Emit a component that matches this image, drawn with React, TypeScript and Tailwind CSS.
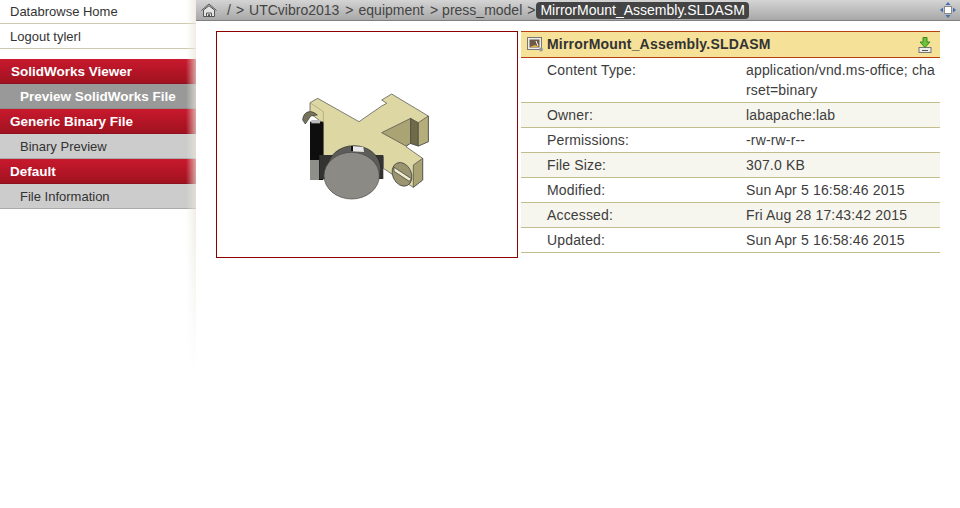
import React from "react";

const rows: [string, string][] = [
  ["Owner:", "labapache:lab"],
  ["Permissions:", "-rw-rw-r--"],
  ["File Size:", "307.0 KB"],
  ["Modified:", "Sun Apr 5 16:58:46 2015"],
  ["Accessed:", "Fri Aug 28 17:43:42 2015"],
  ["Updated:", "Sun Apr 5 16:58:46 2015"],
];

function Head({ children, pl }: { children: string; pl: string }) {
  return (
    <div className={`h-[25px] leading-[25px] font-bold text-white text-[13.5px] bg-gradient-to-b from-[#c9192e] to-[#a0121f] border-b border-[#8c1020] ${pl}`}>
      {children}
    </div>
  );
}

function Item({ children, active }: { children: string; active?: boolean }) {
  return (
    <div
      className={
        active
          ? "h-[25px] leading-[25px] pl-[20px] font-bold text-white text-[13.5px] bg-[#999999] border-b border-[#8a8a8a]"
          : "h-[25px] leading-[25px] pl-[20px] text-[#333333] text-[13px] bg-[#cccccc] border-b border-[#aaaaaa]"
      }
    >
      {children}
    </div>
  );
}

function Part() {
  return (
    <svg width="170" height="130" viewBox="0 0 510 390" className="ml-[63px] mt-[48px] block">
      <polygon points="90,68 113,55 237,125 305,78 320,70 305,60 335,42 445,108 445,185 415,198 390,190 378,200 428,235 428,300 400,322 340,285 310,265 310,230 130,230 130,130 90,100" fill="#ddd7a4" stroke="#444" strokeWidth="2" strokeLinejoin="round" />
      <path d="M90,68 L130,95 L130,130" fill="none" stroke="#8f8a62" strokeWidth="1.5" />
      <polygon points="305,158 392,115 392,190 378,198" fill="#aaa474" stroke="#444" strokeWidth="2" />
      <polygon points="392,115 415,128 415,198 392,190" fill="#6f6b48" stroke="#444" strokeWidth="2" />
      <polygon points="415,128 445,108 445,185 415,198" fill="#b5ae7a" stroke="#444" strokeWidth="2" />
      <polygon points="400,255 428,235 428,300 400,322" fill="#a9a373" stroke="#444" strokeWidth="2" />
      <rect x="90" y="125" width="40" height="175" fill="#0e0e0e" />
      <rect x="90" y="240" width="27" height="60" fill="#8f8f8a" />
      <rect x="118" y="225" width="192" height="72" fill="#333331" />
      <ellipse cx="222" cy="266" rx="80" ry="69" fill="#5c5c58" stroke="#222" strokeWidth="2" />
      <path d="M212 198 L212 214 L252 216 L250 201 Z" fill="#e8e8e8" />
      <rect x="212" y="198" width="7" height="16" fill="#111" />
      <ellipse cx="215" cy="287" rx="83" ry="70" fill="#8b8a85" stroke="#444" strokeWidth="2" />
      <ellipse cx="366" cy="283" rx="28" ry="37" fill="#9a9570" stroke="#333" strokeWidth="2" transform="rotate(-25 366 283)" />
      <path d="M342 262 L394 296 L388 304 L342 274 Z" fill="#f0edcf" stroke="#333" strokeWidth="2" />
      <path d="M68 120 C70 92 95 88 112 105 L92 108 L76 132 Z" fill="#77735a" stroke="#333" strokeWidth="2" />
      <rect x="94" y="120" width="26" height="10" fill="#bbb" />
    </svg>
  );
}

export default function App() {
  return (
    <div className="relative flex w-[960px] h-[508px] bg-white overflow-hidden text-[14px] text-[#333333] font-['Liberation_Sans',Arial,sans-serif]">
      <aside className="relative w-[196px] shrink-0 text-[13px]">
        <div className="h-[24px] leading-[23px] pl-[10px] border-b border-[#cfc9b0]">Databrowse Home</div>
        <div className="h-[25px] leading-[25px] pl-[10px] border-b border-[#cfc9b0]">Logout tylerl</div>
        <div className="mt-[10px]">
          <Head pl="pl-[11px]">SolidWorks Viewer</Head>
          <Item active>Preview SolidWorks File</Item>
          <Head pl="pl-[10px]">Generic Binary File</Head>
          <Item>Binary Preview</Item>
          <Head pl="pl-[10px]">Default</Head>
          <Item>File Information</Item>
        </div>
        <div className="absolute right-0 top-0 w-[10px] h-[372px] bg-gradient-to-r from-transparent to-[#e9e5da] opacity-70 [mask-image:linear-gradient(to_bottom,black_55%,transparent)]" />
      </aside>
      <main className="flex-1 min-w-0">
        <nav className="h-[21px] flex items-center bg-gradient-to-b from-[#d4d4d4] to-[#a8a8a8] border-b border-[#808080] text-[#444444] pl-[5px]">
          <svg width="16" height="15" viewBox="0 0 16 15" fill="none" stroke="#555" strokeWidth="1" className="shrink-0">
            <path d="M0.5 7.5 L8 1 L15.5 7.5" />
            <path d="M2.5 7 L8 2.8 L13.5 7 V13.5 H2.5 Z" fill="#e4e4e4" />
            <path d="M5.5 13.5 V10 H10.5 V13.5 M7.5 13.5 V11.5 H8.5 V13.5" />
          </svg>
          <span className="ml-[10px]">/</span>
          <span className="ml-[5px]">&gt;</span>
          <span className="ml-[5px]">UTCvibro2013</span>
          <span className="ml-[6px]">&gt;</span>
          <span className="ml-[5px]">equipment</span>
          <span className="ml-[6px]">&gt;</span>
          <span className="ml-[4px]">press_model</span>
          <span className="ml-[5px]">&gt;</span>
          <span className="ml-[1px] h-[17px] leading-[17px] px-[4px] rounded-[4px] bg-[#444444] text-white">MirrorMount_Assembly.SLDASM</span>
          <svg width="16" height="16" viewBox="0 0 16 16" className="ml-auto mr-[4px] shrink-0">
            <rect x="4.5" y="4.5" width="7" height="7" fill="#fff" stroke="#8a8a8a" />
            <path d="M8 0 L10.5 3 H5.5 Z M8 16 L10.5 13 H5.5 Z" fill="#3f6fb5" />
            <path d="M0 8 L3 5.5 V10.5 Z M16 8 L13 5.5 V10.5 Z" fill="#3f6fb5" />
          </svg>
        </nav>
        <div className="flex mt-[10px] ml-[20px]">
          <div className="w-[302px] h-[227px] border border-[#8b0000] shrink-0">
            <Part />
          </div>
          <div className="w-[419px] ml-[3px] tracking-[0.16px] text-[#3d3d3d]">
            <div className="h-[27px] flex items-center bg-[#f5e198] border-y border-[#b8400e] pl-[6px] pr-[8px]">
              <svg width="16" height="15" viewBox="0 0 16 15" className="shrink-0">
                <rect x="0.5" y="0.5" width="14" height="12" fill="#eee" stroke="#777" />
                <rect x="2.5" y="2.5" width="10" height="8" fill="#6b5a45" />
                <path d="M3 10 L8 8 L12 10 Z" fill="#e8b040" />
                <path d="M9 4 L11 9" stroke="#fff" />
                <circle cx="14" cy="12.5" r="2" fill="#999" />
              </svg>
              <span className="ml-[4px] font-bold text-[14px] text-[#333333] tracking-[0.2px]">MirrorMount_Assembly.SLDASM</span>
              <svg width="14" height="16" viewBox="0 0 14 16" className="ml-auto shrink-0">
                <rect x="1" y="10.5" width="12" height="5" fill="#eee" stroke="#777" />
                <rect x="4" y="13" width="6" height="1" fill="#555" />
                <path d="M5 0.5 H9 V5 H12 L7 10.5 L2 5 H5 Z" fill="#6cc23a" stroke="#3b8a1c" />
              </svg>
            </div>
            <div className="flex h-[45px] pt-[2px] border-b border-[#c2bd8c] leading-[20px]">
              <div className="w-[225px] pl-[26px] shrink-0">Content Type:</div>
              <div className="w-[190px] break-all">application/vnd.ms-office; charset=binary</div>
            </div>
            {rows.map(([k, v], i) => (
              <div
                key={k}
                className={
                  i % 2 === 0
                    ? "flex h-[25px] leading-[24px] border-b border-[#c2bd8c] bg-[#f7f6ee]"
                    : "flex h-[25px] leading-[24px] border-b border-[#c2bd8c]"
                }
              >
                <div className="w-[225px] pl-[26px]">{k}</div>
                <div>{v}</div>
              </div>
            ))}
          </div>
        </div>
      </main>
    </div>
  );
}
